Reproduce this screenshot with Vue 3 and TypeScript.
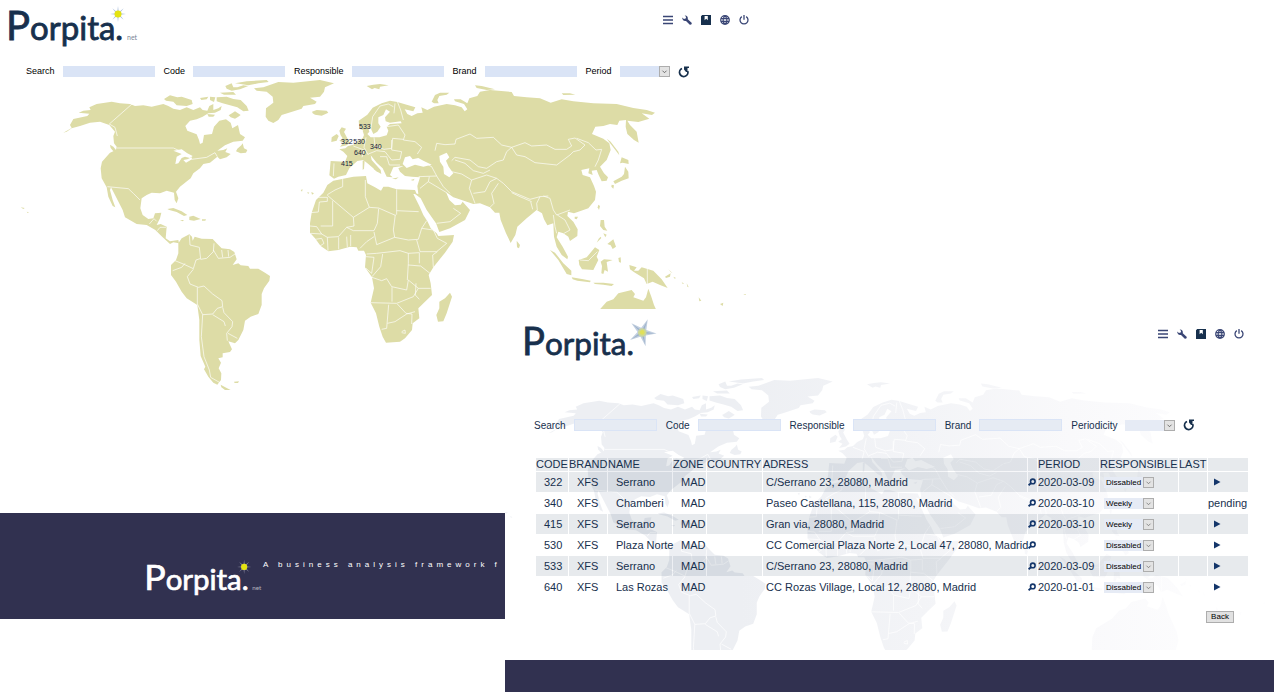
<script setup lang="ts">
import { h, ref } from 'vue'

/* ---------- world map geometry, in thirds of a pixel ---------- */
type Shape = [dx: number, dy: number, points: string]

function shift([dx, dy, points]: Shape): string {
  return points
    .trim()
    .split(/\s+/)
    .map((pair) => {
      const [x, y] = pair.split(',').map(Number)
      return `${x + dx},${y + dy}`
    })
    .join(' ')
}

const americas: [number, number] = [0, 0]
const east: [number, number] = [1020, 180]
const south: [number, number] = [0, 540]
const north: [number, number] = [870, 210]

const lands: string[] = ([
  /* North and Central America */
  [...americas, '190,398 215,384 210,375 220,357 262,348 268,341 236,338 250,332 272,330 268,322 290,312 335,305 360,310 390,312 405,318 430,316 455,320 490,312 505,318 520,326 540,330 560,322 580,330 600,322 608,330 622,332 628,318 640,312 640,330 655,325 665,318 662,330 645,338 625,340 608,350 590,358 570,362 556,378 562,392 590,403 597,420 600,432 608,428 612,405 636,402 642,380 658,362 678,358 692,368 697,385 714,375 720,402 735,412 728,422 700,425 675,436 652,452 670,450 682,445 676,456 692,462 680,472 660,478 652,470 630,488 610,492 600,505 580,520 572,535 540,560 528,575 535,595 530,610 524,600 522,578 500,572 480,580 455,578 440,585 425,595 421,625 428,645 445,657 460,655 465,640 484,638 480,655 470,675 482,672 500,680 497,715 510,724 535,720 537,730 520,727 510,732 488,712 466,690 440,675 410,672 375,652 368,630 345,585 333,562 330,570 338,600 346,622 338,618 325,590 320,562 305,535 302,505 306,485 330,458 348,450 350,440 342,430 340,408 345,395 328,375 300,365 270,368 240,378 215,385 200,395'],
  /* Greenland, Iceland and the Arctic islands */
  [...americas, '762,265 790,262 835,246 880,248 960,240 1002,250 975,262 972,275 960,290 930,293 950,305 945,312 910,318 905,326 862,340 845,345 835,360 820,369 805,362 797,350 798,325 820,308 818,290 800,275 770,272'],
  [...americas, '936,335 950,330 980,332 985,338 965,347 945,344 938,340'],
  [...americas, '492,297 510,286 532,292 545,290 575,300 578,312 560,318 530,316 520,305 498,302'],
  [...americas, '650,292 680,290 700,297 722,300 740,318 746,332 730,334 712,322 690,316 668,310 650,304'],
  [...americas, '696,340 705,334 722,345 715,350 705,356 692,352 686,346'],
  [...americas, '600,294 625,290 620,298 604,300'],
  [...americas, '630,290 646,292 642,306 630,300'],
  [...americas, '676,258 695,250 700,262 712,262 730,256 745,258 720,268 695,272 680,266'],
  [...americas, '705,250 740,244 800,240 806,246 775,250 745,256 722,252'],
  [...americas, '660,278 700,276 708,284 672,284'],
  [...americas, '622,342 645,344 640,350 626,350'],
  [...americas, '712,446 724,436 728,430 732,445 742,450 738,458 722,460 708,454'],
  [...americas, '330,434 340,440 350,452 342,456 332,444'],
  [...americas, '62,622 74,624 70,627'],
  [...americas, '80,635 87,637 83,639'],
  [...americas, '502,627 520,624 545,634 562,645 552,648 530,636 508,630'],
  [...americas, '568,650 580,647 602,657 582,662 568,660'],
  [...americas, '540,660 552,660 548,664'],
  [...americas, '606,658 618,658 616,662 606,662'],
  /* South America */
  [...south, '535,190 545,175 568,163 576,170 578,182 584,170 605,176 638,177 650,190 665,205 690,208 703,216 710,238 698,255 715,250 722,256 745,258 750,266 775,266 795,278 810,288 808,302 792,325 785,342 785,375 775,402 752,410 735,422 730,450 715,480 705,490 685,484 696,508 690,516 668,520 668,532 655,535 663,548 656,565 664,580 663,600 652,614 640,608 625,590 612,568 616,560 602,528 598,480 598,420 592,375 560,355 545,335 528,305 513,285 513,255 528,240 535,220'],
  [...south, '662,614 680,624 692,630 675,630 664,622'],
  [...south, '702,605 717,604 714,609 704,609'],
  /* Africa */
  [...south, '1000,2 1030,-4 1060,-10 1098,-12 1102,10 1125,22 1143,32 1150,20 1165,20 1190,28 1245,30 1250,42 1240,42 1258,78 1270,105 1283,125 1292,145 1310,160 1315,168 1362,165 1358,185 1335,218 1300,262 1286,285 1292,310 1296,345 1275,365 1255,385 1258,415 1238,430 1236,450 1215,475 1200,485 1158,488 1148,470 1138,440 1128,400 1112,368 1122,325 1116,292 1095,262 1098,225 1092,212 1075,212 1070,202 1050,200 1015,210 985,214 962,198 945,175 930,158 930,130 935,98 948,60 970,38 982,15'],
  [...south, '1350,338 1356,350 1340,400 1330,424 1314,425 1309,405 1318,385 1318,365 1335,355'],
  /* Europe and Asia */
  [...east, '-28,303 15,305 22,288 10,275 -2,268 16,265 24,258 40,254 52,243 68,235 72,225 68,212 85,205 88,215 82,222 92,232 118,232 140,226 145,212 140,200 150,192 185,190 182,184 150,188 137,184 135,172 150,155 138,148 130,165 115,172 115,190 122,200 112,215 100,222 92,205 75,213 58,206 56,182 82,164 98,143 125,130 150,122 172,126 200,134 226,142 220,154 194,148 202,162 215,168 232,160 248,158 244,142 262,150 282,140 320,132 345,136 365,142 374,154 382,148 372,132 345,124 342,118 362,118 382,130 388,115 412,108 420,95 450,90 475,92 515,96 522,108 560,112 600,115 632,128 665,118 700,124 760,130 830,132 880,144 920,150 945,158 936,165 905,160 928,176 895,186 862,182 870,195 890,215 896,248 882,240 862,222 857,200 858,180 838,182 832,195 810,192 790,198 766,200 756,222 790,236 808,250 812,270 800,300 780,320 792,340 804,352 800,362 785,364 776,345 770,330 755,332 758,345 745,340 748,325 724,330 728,345 750,352 762,378 768,395 765,420 745,445 715,455 702,460 684,455 682,468 700,485 713,508 712,528 690,543 685,530 670,520 655,515 650,532 668,560 684,590 682,598 665,585 650,560 642,530 640,490 622,496 612,478 606,460 590,450 560,475 532,500 526,525 512,549 498,520 482,480 478,458 465,458 450,442 420,430 400,432 365,420 340,412 318,396 328,420 345,436 362,434 368,425 390,450 375,480 330,505 298,516 288,490 260,450 242,415 222,400 235,402 232,378 240,352 215,350 195,348 180,335 175,325 190,318 160,322 150,345 158,352 140,350 128,325 110,308 92,286 95,300 122,330 124,342 112,335 85,312 70,300 52,303 42,312 28,325 18,345 -5,350 -18,356 -32,346 -30,325'],
  [...east, '275,125 285,105 300,98 328,98 320,104 298,108 292,120 296,130 282,130'],
  [...east, '80,78 100,74 120,72 146,76 120,80 118,88 104,84 96,88'],
  [...east, '405,76 425,78 465,88 440,90 410,84'],
  [...east, '665,100 690,100 706,104 670,105'],
  [...east, '800,236 812,245 835,275 838,286 826,270'],
  [...east, '845,292 865,300 866,312 848,308 840,310'],
  [...east, '855,320 865,335 866,355 845,362 825,372 820,364 845,350 852,342'],
  [...east, '815,374 822,376 820,386 814,380'],
  [...east, '775,434 780,438 777,450 773,442'],
  [...east, '704,470 714,470 710,478 704,476'],
  [...east, '530,542 540,555 537,565 531,562'],
  [...east, '782,480 792,480 794,500 802,512 790,510 780,498'],
  [...east, '802,552 820,538 828,560 818,567 812,556'],
  [...east, '790,520 800,524 796,532'],
  [...east, '782,530 784,534 770,548 776,536'],
  [...east, '630,570 645,578 670,610 694,632 694,646 680,642 655,600'],
  [...east, '695,652 730,658 752,662 750,667 712,662 698,658'],
  [...east, '760,668 790,668 822,672 815,678 790,674 765,672'],
  [...east, '716,600 740,592 765,562 778,570 770,590 775,600 760,630 726,628 718,615'],
  [...east, '782,605 792,598 818,600 800,606 804,635 794,630 790,642 784,640 786,618'],
  [...east, '835,594 842,592 843,608 837,606'],
  [...east, '868,615 890,622 882,632 895,632 905,622 940,632 965,658 983,684 960,675 938,665 920,672 912,655 885,638 870,628'],
  [...east, '975,650 992,640 990,650 978,654'],
  [...east, '985,628 998,640 992,636'],
  [...east, '1000,650 1008,654 1004,656'],
  [...east, '1025,665 1032,672 1028,672'],
  [...east, '1040,670 1046,682 1042,680'],
  [...east, '1076,712 1084,722 1078,724'],
  [...east, '1140,732 1150,728 1148,738'],
  [...east, '1210,702 1218,702 1216,705'],
  [...east, '722,838 724,800 735,775 780,748 800,725 820,718 835,700 875,690 885,702 880,712 910,722 918,712 925,686 934,710 942,735 965,785 970,810 962,838'],
  /* British Isles and smaller islands */
  [...north, '148,182 155,172 168,176 162,186 172,205 180,218 170,226 150,230 160,218 148,212 158,205 152,196'],
  [...north, '125,202 140,192 146,198 140,212 124,216'],
  [...north, '250,296 268,298 262,306'],
  [...north, '218,272 224,270 222,296 218,300'],
  [...north, '306,326 326,322 318,328'],
  [...north, '362,330 374,326 370,332'],
  [...americas, '902,570 908,568 906,575'],
  [...americas, '922,576 928,578 924,582'],
  [...americas, '934,576 942,580 936,584'],
] as Shape[]).map(shift)

/* inland seas */
const seas: string[] = ([
  [...north, '338,282 345,262 360,258 368,268 385,264 400,272 425,284 400,290 375,284 350,294'],
  [...north, '448,258 470,248 478,262 468,272 476,290 490,310 478,322 462,312 460,290 450,275'],
  [...americas, '520,452 545,448 562,460 578,468 570,474 555,470 545,474 535,490 526,492 530,470 545,462'],
  [...americas, '550,480 562,478 575,472 576,478 558,488'],
] as Shape[]).map(shift)

const borders: string[] = ([
  [...americas, '328,372 396,312'],
  [...americas, '328,372 345,382 352,408'],
  [...americas, '350,444 520,444 545,455'],
  [...americas, '575,478 620,472 645,458 652,470'],
  [...americas, '322,560 385,566 400,580 420,600'],
  [...americas, '448,672 462,656 470,664'],
  [...americas, '472,692 480,682 498,682'],
  [...south, '568,166 570,195 598,202 602,238 620,235 640,215 642,190'],
  [...south, '640,210 655,235 690,232 705,222'],
  [...south, '665,210 668,232'],
  [...south, '684,210 686,230'],
  [...south, '520,240 550,252 580,266 588,240 600,236'],
  [...south, '518,272 545,262 555,250'],
  [...south, '580,268 562,290 570,312 595,322 612,318'],
  [...south, '592,322 592,372 608,404 638,402 652,385 668,380 666,362 638,342 612,318'],
  [...south, '668,382 672,398 698,425 696,440 680,460 682,482'],
  [...south, '638,404 672,425 676,438'],
  [...south, '684,460 712,475'],
  [...south, '608,404 604,470 612,530 628,570 632,592 660,608'],
  [...south, '930,98 955,96 958,66 982,64 982,52 955,52'],
  [...south, '982,44 1005,30 1028,20 1028,-4'],
  [...south, '982,46 1060,112 1108,82 1096,50 1096,0'],
  [...south, '998,62 998,138 962,138'],
  [...south, '1190,28 1190,104'],
  [...south, '1190,92 1256,95'],
  [...south, '1108,82 1136,84 1186,106'],
  [...south, '1136,86 1132,130 1122,152 1060,152 1040,142 1062,138 1060,112'],
  [...south, '1186,104 1180,150 1184,172 1130,194 1122,156'],
  [...south, '1184,172 1225,180 1255,178 1265,145 1280,122'],
  [...south, '1265,145 1300,150 1312,175 1340,190 1310,215 1260,215 1250,180'],
  [...south, '1300,262 1298,225 1312,215'],
  [...south, '982,172 984,212'],
  [...south, '1016,172 1016,208'],
  [...south, '1040,170 1042,202'],
  [...south, '1052,165 1052,198'],
  [...south, '930,138 950,140 965,162 932,160'],
  [...south, '965,162 982,172 1015,170 1040,142'],
  [...south, '946,178 965,175 972,190 960,198'],
  [...south, '1080,205 1100,185 1122,170'],
  [...south, '1100,222 1130,220 1200,212 1225,220 1225,250 1222,300'],
  [...south, '1098,230 1122,232 1115,280 1098,265'],
  [...south, '1148,222 1142,260 1116,290'],
  [...south, '1116,292 1145,302 1160,296 1175,320 1220,330 1225,300 1255,325 1292,325'],
  [...south, '1225,255 1262,258 1290,280'],
  [...south, '1225,220 1258,218 1258,250'],
  [...south, '1112,368 1190,370 1240,350 1255,325'],
  [...south, '1176,322 1176,365'],
  [...south, '1166,374 1160,445 1145,448'],
  [...south, '1162,430 1185,425 1220,402 1245,395'],
  [...south, '1192,372 1218,400 1236,402 1235,432'],
  [...south, '1205,455 1215,450 1216,460 1205,458'],
  [...south, '1248,310 1246,345 1258,358'],
  [...east, '285,272 290,250 315,254 345,252 348,238 390,222 410,235 460,232 485,255 515,262 500,275 490,300 470,305 440,325 415,320 390,300 345,292 335,302'],
  [...east, '515,262 555,248 575,258 620,255 645,268 680,268 695,258 685,238 705,234 735,255 720,270 700,275 690,285 650,315 585,308 555,290 530,285 515,262'],
  [...east, '710,235 745,248 768,270 785,268 775,300 765,320'],
  [...east, '345,300 375,310 400,332 430,340 450,330'],
  [...east, '335,335 365,342 395,360 440,345 470,355'],
  [...east, '395,360 388,385 405,430'],
  [...east, '400,400 435,395 450,365 470,355 490,370 515,395 570,418 600,410 625,408'],
  [...east, '475,370 455,400 462,430 450,442'],
  [...east, '515,398 540,410 575,425'],
  [...east, '572,425 578,448'],
  [...east, '600,410 590,430 592,450'],
  [...east, '610,408 630,415 640,450 650,465 690,450'],
  [...east, '640,465 645,500 650,520'],
  [...east, '652,465 675,480 690,510 672,520'],
  [...east, '236,350 290,348 310,380 330,400'],
  [...east, '290,348 275,320 265,315'],
  [...east, '240,385 265,365 268,350'],
  [...east, '265,365 320,398'],
  [...east, '290,490 330,485 362,460 340,445'],
  [...east, '172,125 182,150 190,180'],
  [...east, '165,130 162,160'],
  [...east, '92,210 98,170 120,138 145,132 160,140'],
  [...east, '140,200 175,195 195,225 190,240 225,245 245,262 232,282'],
  [...east, '102,232 105,258 132,268 155,265 158,235 190,238'],
  [...east, '78,232 72,262 85,285'],
  [...east, '40,258 72,270 66,292'],
  [...east, '155,240 155,270 185,275 180,298'],
  [...east, '85,282 110,272 135,275 155,300 180,298'],
  [...east, '120,290 140,290 148,315 180,315'],
  [...east, '-18,310 -20,348'],
  [...east, '922,626 922,672'],
  [...east, '720,600 745,602 772,575'],
] as Shape[]).map(shift)

const stores = [
  { code: '533', x: 1077, y: 386 },
  { code: '322', x: 1023, y: 432 },
  { code: '530', x: 1060, y: 432 },
  { code: '340', x: 1110, y: 447 },
  { code: '640', x: 1062, y: 466 },
  { code: '415', x: 1023, y: 498 },
]

/* ---------- brand mark ---------- */
const rays = (cx: number, cy: number, n: number, outer: number, inner: number, turn: number) =>
  Array.from({ length: n * 2 }, (_, i) => {
    const r = i % 2 ? inner : outer
    const a = turn + (i * Math.PI) / n
    return `${(cx + r * Math.cos(a)).toFixed(2)},${(cy + r * Math.sin(a)).toFixed(2)}`
  }).join(' ')

const Logo = (props: { kind: string }) => {
  const ink = props.kind === 'light' ? '#ffffff' : '#17304d'
  const face = { 'font-family': 'Lato, sans-serif', fill: ink }
  const word = { ...face, stroke: ink, 'stroke-width': 0.8 }
  const parts = [
    h('text', { ...word, x: -2, y: 36, 'font-size': 40 }, 'P'),
    h('text', { ...word, x: 22, y: 36, 'font-size': 33 }, 'orpita.'),
  ]
  if (props.kind === 'star') {
    parts.push(
      h('polygon', { points: rays(124, 12, 5, 15, 5, 0.08), fill: '#c3d0e0' }),
      h('polygon', { points: rays(124, 12, 5, 13, 2, 0.08), fill: '#9db2cb' }),
      h('circle', { cx: 124, cy: 12, r: 4.5, fill: '#ccd79a' }),
      h('circle', { cx: 124, cy: 12, r: 2.5, fill: '#e0e05a' }),
    )
  } else {
    const ray = props.kind === 'light' ? '#85859c' : '#a9bddb'
    parts.push(
      h('polygon', { points: rays(110, 10, 8, 8, 2, 0), fill: ray }),
      h('circle', { cx: 110, cy: 10, r: 3.5, fill: '#e4e312' }),
      h('text', { ...face, x: 119, y: 36, 'font-size': 7, opacity: 0.6 }, 'net'),
    )
  }
  return h('svg', { viewBox: '0 0 130 46', overflow: 'visible', role: 'img', 'aria-label': 'Porpita' }, parts)
}
Logo.props = ['kind']

/* ---------- toolbar icons, on a 10 by 10 grid ---------- */
interface Tool {
  name: string
  line?: string
  width?: number
  solid?: string
  ink?: string
}
const tools: Tool[] = [
  { name: 'Menu', line: 'M0 1.5h10M0 5h10M0 8.5h10', width: 1.6 },
  { name: 'Settings', solid: 'M.3 2.6C0 4.8 1.8 6.400 4 5.900L7.800 9.700Q8.800 10 9.500 9.300Q10 8.500 9.600 7.800L5.800 4.200C6.300 2 4.800.2 2.700.4L4.100 1.900 3.700 3.600 1.900 4.100z' },
  { name: 'Catalogue', solid: 'M0 1.2L1.200 0H10v10H0zM3.600 1v4.200L5.200 3.800 6.800 5.200V1z', ink: '#17304d' },
  { name: 'Language', line: 'M5 .7a4.300 4.300 0 1 0 0 8.600a4.300 4.300 0 1 0 0-8.600zM.7 3.600h8.600M.7 6.400h8.600M5 .7C2.500 3 2.500 7 5 9.300C7.500 7 7.500 3 5 .7', width: 1.2 },
  { name: 'Log out', line: 'M2.800 1.600a4 4 0 1 0 4.400 0M5 0v4.800', width: 1.3 },
]

/* ---------- data ---------- */
interface Row {
  code: string
  name: string
  address: string
  date: string
  period: string
  pending?: boolean
}
const rows = ref<Row[]>([
  { code: '322', name: 'Serrano', address: 'C/Serrano 23, 28080, Madrid', date: '2020-03-09', period: 'Dissabled' },
  { code: '340', name: 'Chamberi', address: 'Paseo Castellana, 115, 28080, Madrid', date: '2020-03-10', period: 'Weekly', pending: true },
  { code: '415', name: 'Serrano', address: 'Gran via, 28080, Madrid', date: '2020-03-10', period: 'Weekly' },
  { code: '530', name: 'Plaza Norte', address: 'CC Comercial Plaza Norte 2, Local 47, 28080, Madrid', date: '', period: 'Dissabled' },
  { code: '533', name: 'Serrano', address: 'C/Serrano 23, 28080, Madrid', date: '2020-03-09', period: 'Dissabled' },
  { code: '640', name: 'Las Rozas', address: 'CC Rozas Village, Local 12, 28080, Madrid', date: '2020-01-01', period: 'Dissabled' },
])
const heads = ['CODE', 'BRAND', 'NAME', 'ZONE', 'COUNTRY', 'ADRESS', '', 'PERIOD', 'RESPONSIBLE', 'LAST', '']
const fields = ['Search', 'Code', 'Responsible', 'Brand']
const chevron = 'M3 4.5l2.5 2.5 2.5-2.5'
</script>

<template>
  <div class="desk">
    <section class="overview">
      <header class="top">
        <Logo kind="net" class="logo" />
        <nav class="tools">
          <button v-for="t in tools" :key="t.name" type="button" :aria-label="t.name">
            <svg viewBox="0 0 10 10">
              <path v-if="t.line" :d="t.line" :stroke-width="t.width" fill="none" stroke="#3a4675" />
              <path v-else :d="t.solid" :fill="t.ink || '#3a4675'" fill-rule="evenodd" />
            </svg>
          </button>
        </nav>
      </header>

      <form class="filters" @submit.prevent>
        <template v-for="f in fields" :key="f">
          <label :for="'map-' + f">{{ f }}</label>
          <input :id="'map-' + f" type="text" />
        </template>
        <label for="map-period">Period</label>
        <span class="pick">
          <select id="map-period"><option></option><option>Weekly</option></select>
          <svg class="drop" viewBox="0 0 11 11"><path :d="chevron" fill="none" stroke="#555" /></svg>
        </span>
        <button type="submit" class="reload" aria-label="Reload">
          <svg viewBox="0 0 12 12"><path d="M4 2.500A4.200 4.200 0 1 0 9.700 5" fill="none" stroke="#17304d" stroke-width="1.800" /><path d="M6 .5h5v1.500H9.500V6H8L6 3.500z" fill="#17304d" /></svg>
        </button>
      </form>

      <svg class="world" viewBox="0 240 2280 960" role="img" aria-label="World map of stores">
        <g fill="#dddca6"><polygon v-for="p in lands" :key="p" :points="p" /></g>
        <g fill="#fff"><polygon v-for="p in seas" :key="p" :points="p" /></g>
        <g fill="none" stroke="#fff" stroke-width="2"><polyline v-for="p in borders" :key="p" :points="p" /></g>
        <text v-for="s in stores" :key="s.code" :x="s.x" :y="s.y" class="store">{{ s.code }}</text>
      </svg>

      <footer class="banner">
        <Logo kind="light" class="logo" />
        <p>A business analysis framework f</p>
      </footer>
    </section>

    <section class="detail">
      <div class="sheet">
        <svg class="ghost" aria-hidden="true">
          <defs>
            <linearGradient id="fade" gradientUnits="userSpaceOnUse" x1="0" y1="0" x2="2100" y2="0">
              <stop offset="0.35" stop-color="#edeff3" />
              <stop offset="0.6" stop-color="#f3f4f7" />
              <stop offset="0.8" stop-color="#f9f9fb" />
              <stop offset="1" stop-color="#fdfdfe" />
            </linearGradient>
          </defs>
          <g transform="translate(-23 -15) scale(.35)">
            <g fill="url(#fade)"><polygon v-for="p in lands" :key="p" :points="p" /></g>
            <g fill="#fff"><polygon v-for="p in seas" :key="p" :points="p" /></g>
            <g fill="none" stroke="#fff" stroke-width="2"><polyline v-for="p in borders" :key="p" :points="p" /></g>
          </g>
        </svg>

        <header class="top">
          <Logo kind="star" class="logo" />
          <nav class="tools">
            <button v-for="t in tools" :key="t.name" type="button" :aria-label="t.name">
              <svg viewBox="0 0 10 10">
                <path v-if="t.line" :d="t.line" :stroke-width="t.width" fill="none" stroke="#3a4675" />
                <path v-else :d="t.solid" :fill="t.ink || '#3a4675'" fill-rule="evenodd" />
              </svg>
            </button>
          </nav>
        </header>

        <form class="filters" @submit.prevent>
          <template v-for="f in fields" :key="f">
            <label :for="'list-' + f">{{ f }}</label>
            <input :id="'list-' + f" type="text" />
          </template>
          <label for="list-period">Periodicity</label>
          <span class="pick">
            <select id="list-period"><option></option><option>Weekly</option></select>
            <svg class="drop" viewBox="0 0 11 11"><path :d="chevron" fill="none" stroke="#555" /></svg>
          </span>
          <button type="submit" class="reload" aria-label="Reload">
            <svg viewBox="0 0 12 12"><path d="M4 2.500A4.200 4.200 0 1 0 9.700 5" fill="none" stroke="#17304d" stroke-width="1.800" /><path d="M6 .5h5v1.500H9.500V6H8L6 3.500z" fill="#17304d" /></svg>
          </button>
        </form>

        <table>
          <colgroup>
            <col v-for="(c, i) in heads" :key="i" :class="'c' + i" />
          </colgroup>
          <thead>
            <tr><th v-for="(c, i) in heads" :key="i" scope="col">{{ c }}</th></tr>
          </thead>
          <tbody>
            <tr v-for="r in rows" :key="r.code">
              <td>{{ r.code }}</td>
              <td>XFS</td>
              <td>{{ r.name }}</td>
              <td>MAD</td>
              <td></td>
              <td class="address">{{ r.address }}</td>
              <td class="tight">
                <button type="button" class="glyph" :aria-label="'Inspect ' + r.code">
                  <svg viewBox="0 0 8 8"><circle cx="4.800" cy="3.400" r="2.300" fill="none" stroke="#14366a" stroke-width="1.600" /><path d="M3.200 5L.6 7.200" stroke="#14366a" stroke-width="1.800" /></svg>
                </button>
              </td>
              <td class="tight">{{ r.date }}</td>
              <td class="tight">
                <span class="pick">
                  <select v-model="r.period" :aria-label="'Periodicity of ' + r.code">
                    <option>Dissabled</option>
                    <option>Weekly</option>
                  </select>
                  <svg class="drop" viewBox="0 0 11 11"><path :d="chevron" fill="none" stroke="#777" /></svg>
                </span>
              </td>
              <td></td>
              <td class="tight">
                <template v-if="r.pending">pending</template>
                <button v-else type="button" class="glyph play" :aria-label="'Run ' + r.code">
                  <svg viewBox="0 0 8 8"><path d="M1 .5L7.500 4 1 7.500z" fill="#14366a" /></svg>
                </button>
              </td>
            </tr>
          </tbody>
        </table>

        <div class="actions"><button type="button" class="back">Back</button></div>
      </div>
      <footer class="strip"></footer>
    </section>
  </div>
</template>

<style>
body {
  margin: 0;
  background: #fff;
}
</style>

<style scoped>
.desk {
  display: grid;
  grid-template-columns: 505px minmax(0, 1fr);
  grid-template-rows: 309px 1fr;
  min-height: 100vh;
  overflow: hidden;
  font-family: 'Liberation Sans', Arial, sans-serif;
  color: #17304d;
}
.overview {
  grid-area: 1 / 1 / 3 / 3;
  min-width: 0;
}
.detail {
  grid-area: 2 / 2 / 3 / 3;
  z-index: 1;
  display: flex;
  flex-direction: column;
  background: #fff;
}
button {
  padding: 0;
  border: 0;
  background: none;
  font-family: inherit;
  color: inherit;
}
svg {
  display: block;
}

.top {
  display: flex;
  justify-content: space-between;
  align-items: flex-start;
  box-sizing: border-box;
}
.logo {
  width: 130px;
}
.tools {
  display: flex;
  gap: 9px;
}
.tools svg {
  width: 10px;
  height: 10px;
}
.overview .top {
  height: 66px;
  max-width: 749px;
  padding: 4px 0 0 8px;
}
.overview .tools {
  padding-top: 11px;
}

.filters {
  display: flex;
  align-items: center;
  gap: 8px;
}
.filters label {
  line-height: 11px;
}
.filters input {
  box-sizing: border-box;
  border: 0;
  padding: 0 2px;
  font-size: 9px;
  background: #dae4f6;
}
.filters input + label {
  margin-left: 1px;
}
.pick {
  display: grid;
  grid-template-columns: 1fr;
  width: 50px;
  height: 11px;
  background: #dae4f6;
}
.pick select {
  grid-area: 1 / 1;
  min-width: 0;
  height: 100%;
  border: 0;
  padding: 0 0 0 2px;
  background: none;
  appearance: none;
  font-family: inherit;
  font-size: 8px;
  line-height: 11px;
  color: #000;
}
.drop {
  grid-area: 1 / 1;
  justify-self: end;
  box-sizing: border-box;
  width: 11px;
  height: 11px;
  border: 1px solid #adadad;
  background: #e3e3e3;
  pointer-events: none;
}
.reload svg {
  width: 12px;
  height: 12px;
}
.overview .filters {
  height: 11px;
  padding-left: 26px;
  font-size: 9px;
  color: #000;
}
.overview .filters input {
  width: 92px;
  height: 11px;
}

.world {
  width: 760px;
  margin-top: 3px;
}
.store {
  font-size: 21px;
  fill: #14203c;
}
.banner {
  display: flex;
  align-items: flex-start;
  height: 61px;
  margin-top: 113px;
  padding: 45px 0 0 146px;
  background: #313150;
  color: #fff;
}
.banner .logo {
  flex: none;
  width: 116px;
}
.banner p {
  margin: 2px 0 0 1px;
  font-size: 8px;
  line-height: 10px;
  letter-spacing: 4px;
  white-space: nowrap;
}

.sheet {
  position: relative;
  flex: 1;
  padding: 0 25px 0 30px;
}
.sheet > * {
  position: relative;
}
.sheet > .ghost {
  position: absolute;
  top: 0;
  left: 0;
  width: 100%;
  height: calc(100% - 10px);
}
.detail .top {
  height: 110px;
  margin: 0 5px 0 -11px;
  padding-top: 12px;
}
.detail .logo {
  width: 124px;
}
.detail .tools {
  padding-top: 8px;
}
.detail .filters {
  height: 12px;
  margin-left: -1px;
  font-size: 10px;
}
.detail .filters input {
  width: 83px;
  height: 12px;
  border: 1px solid #dae4f6;
  background: #e6ebf3;
}
.detail .pick {
  background: #e6ebf5;
}

table {
  width: 100%;
  margin-top: 26px;
  table-layout: fixed;
  border-spacing: 1px;
  font-size: 11px;
}
.c0 { width: 32px; }
.c1 { width: 38px; }
.c2 { width: 64px; }
.c3 { width: 33px; }
.c4 { width: 55px; }
.c6 { width: 9px; }
.c7 { width: 61px; }
.c8 { width: 78px; }
.c9 { width: 28px; }
.c10 { width: 40px; }
th {
  height: 13px;
  padding: 0;
  background: rgba(20, 50, 80, 0.1);
  font-weight: 400;
  line-height: 13px;
  text-align: left;
  white-space: nowrap;
}
td {
  height: 20px;
  padding: 0 0 0 8px;
  line-height: 20px;
  white-space: nowrap;
}
td.address {
  padding-left: 3px;
}
td.tight {
  padding-left: 0;
}
tbody tr:nth-child(odd) td {
  background: rgba(20, 50, 80, 0.1);
}
td .pick {
  margin-left: 4px;
}
.glyph {
  display: block;
}
.glyph svg {
  width: 8px;
  height: 8px;
}
.play {
  margin-left: 5px;
}
.actions {
  display: flex;
  justify-content: flex-end;
  margin-top: 13px;
  padding-right: 15px;
}
.back {
  width: 28px;
  height: 12px;
  border: 1px solid #adadad;
  background: #e1e1e1;
  font-size: 8px;
  line-height: 10px;
  color: #000;
}
.strip {
  height: 32px;
  background: #313150;
}
</style>
